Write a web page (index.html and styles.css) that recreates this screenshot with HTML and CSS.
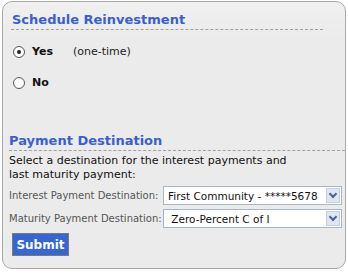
FILE: index.html
```html
<!DOCTYPE html>
<html lang="en">
<head>
    <meta charset="UTF-8">
    <title>Schedule Reinvestment</title>
    <link rel="stylesheet" href="styles.css">
</head>
<body>
    <div class="panel">
        <h2 class="heading first">Schedule Reinvestment</h2>
        <div class="radios">
            <label class="radio-row">
                <span class="radio checked"></span>
                <span class="choice">Yes</span>
                <span class="note">(one-time)</span>
            </label>
            <label class="radio-row">
                <span class="radio"></span>
                <span class="choice">No</span>
            </label>
        </div>

        <h2 class="heading second">Payment Destination</h2>
        <p class="intro">Select a destination for the interest payments and last maturity payment:</p>
        <div class="field">
            <span class="label">Interest Payment Destination:</span>
            <div class="select"><span>First Community - *****5678</span><span class="arrow"></span></div>
        </div>
        <div class="field">
            <span class="label">Maturity Payment Destination:</span>
            <div class="select"><span>&nbsp;Zero-Percent C of I</span><span class="arrow"></span></div>
        </div>
        <button class="submit">Submit</button>
    </div>
</body>
</html>
```

FILE: styles.css
```css
* {
    box-sizing: border-box;
    font-family: "DejaVu Sans", Verdana, sans-serif;
}

body {
    margin: 0;
    background: #fff;
    padding: 1px 2px;
}

.panel {
    width: 344px;
    height: 268px;
    border: 1px solid #a9a9a9;
    border-radius: 10px;
    background: linear-gradient(#f0f0f0, #ebebeb 40px);
    padding: 0 0 0 6px;
}

.heading {
    margin: 0;
    font-size: 13px;
    font-weight: bold;
    color: #3a5fd0;
    border-bottom: 1px dashed #a0a0a0;
    padding-bottom: 2px;
}

.heading.first {
    margin: 10px 22px 0 2px;
    padding-left: 1px;
}

.heading.second {
    margin: 0;
    padding-top: 0;
}

.radios {
    padding: 15px 0 0 4px;
    height: 103px;
}

.radio-row {
    display: flex;
    align-items: center;
    height: 13px;
    margin-bottom: 18px;
    font-size: 11px;
}

.radio {
    width: 12px;
    height: 12px;
    border: 1px solid #555;
    border-radius: 50%;
    background: #fff;
    margin-right: 7px;
    position: relative;
}

.radio.checked::after {
    content: "";
    position: absolute;
    left: 3px;
    top: 3px;
    width: 4px;
    height: 4px;
    border-radius: 50%;
    background: #222;
}

.choice {
    font-weight: bold;
    color: #111;
    width: 41px;
}

.note {
    color: #222;
}

.intro {
    margin: 3px 0 4px 0;
    font-size: 11px;
    line-height: 14px;
    color: #111;
    width: 300px;
}

.field {
    display: flex;
    align-items: center;
    margin-bottom: 4px;
}

.label {
    font-size: 10px;
    color: #555;
    width: 154px;
    flex: none;
    white-space: nowrap;
}

.select {
    width: 179px;
    height: 19px;
    border: 1px solid #a9b6c6;
    background: #fff;
    display: flex;
    align-items: center;
    justify-content: space-between;
    font-size: 10.5px;
    color: #111;
    padding: 0 1px 0 4px;
    white-space: nowrap;
}

.arrow {
    width: 14px;
    height: 15px;
    background: #dfe6f1;
    border: 1px solid #c5cfdd;
    position: relative;
    flex: none;
}

.arrow::after {
    content: "";
    position: absolute;
    left: 3px;
    top: 2px;
    width: 4px;
    height: 4px;
    border-right: 2px solid #4b6594;
    border-bottom: 2px solid #4b6594;
    transform: rotate(45deg);
}

.submit {
    margin: 1px 0 0 3px;
    width: 57px;
    height: 23px;
    background: #3666d1;
    border: 1px solid #7a7a7a;
    color: #fff;
    font-weight: bold;
    font-size: 12px;
    padding: 0;
}
```
